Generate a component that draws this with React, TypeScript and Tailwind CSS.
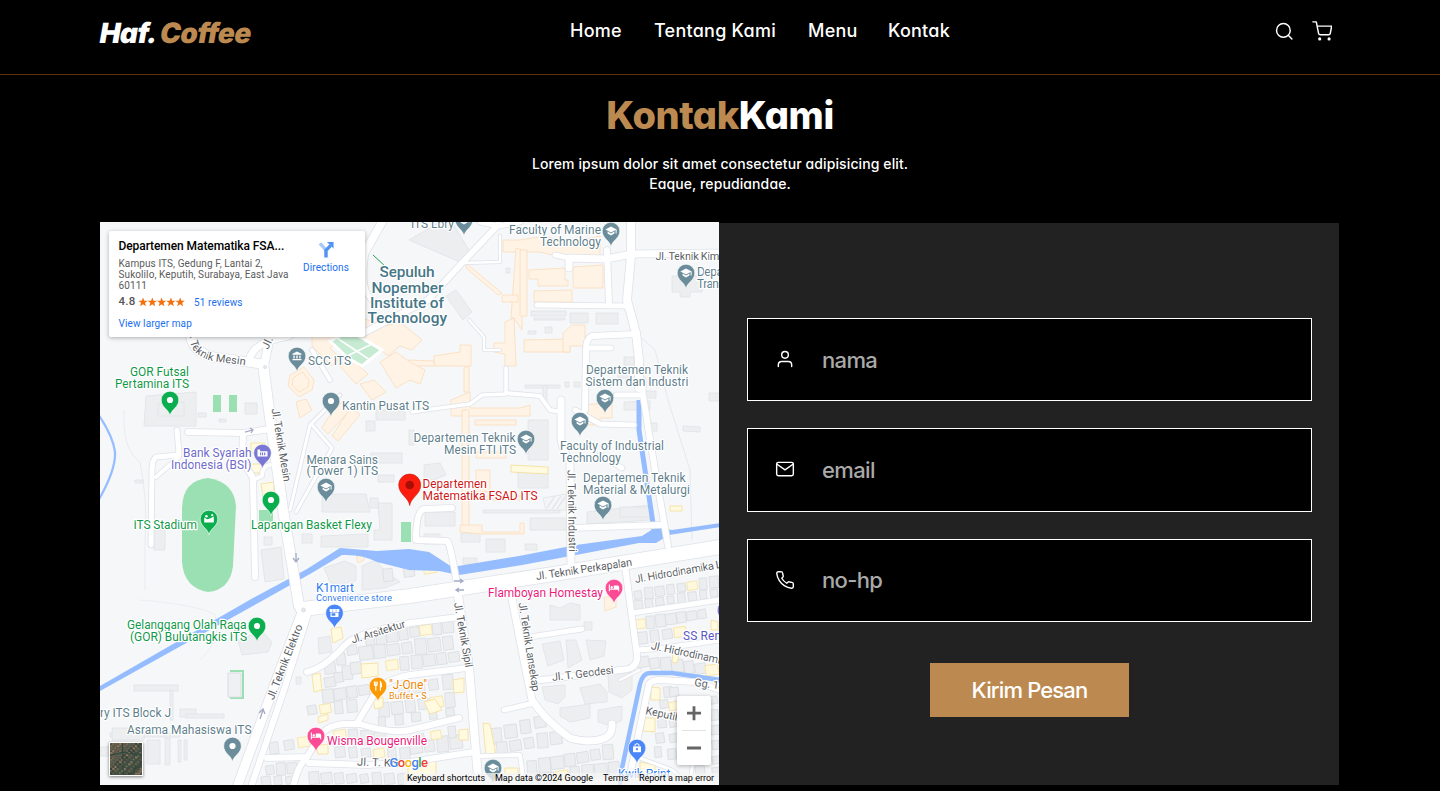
import { FiMail, FiPhone, FiSearch, FiShoppingCart, FiUser } from "react-icons/fi";

const GREY = "#6b8d9b";
const GREEN = "#0aae4f";
const PURPLE = "#7a76d3";
const PINK = "#fb4b94";
const BLUE = "#4a86f7";
const ORANGE = "#fb9a05";

type Glyph = "dot" | "cap" | "bank" | "shop" | "bed" | "fork" | "bag" | "field" | "card";

function PinGlyph({ kind }: { kind: Glyph }) {
  switch (kind) {
    case "dot":
      return <circle r="3.1" fill="#fff" />;
    case "cap":
      return (
        <g fill="#fff">
          <path d="M-5.6 -1.6 L0 -4.6 L5.6 -1.6 L0 1.4 Z" />
          <path d="M-3.4 .6 L0 2.4 L3.4 .6 V2.6 L0 4.4 L-3.4 2.6 Z" />
          <path d="M4.6 -1.6h1v4h-1z" />
        </g>
      );
    case "bank":
      return (
        <path
          fill="#fff"
          d="M-4.5 -2.2 L0 -4.6 L4.5 -2.2 V-1.2 H-4.5Z M-3.6 -.6h1.3v3.2h-1.3z M-.7 -.6h1.4v3.2h-1.4z M2.3 -.6h1.3v3.2h-1.3z M-4.5 3.1h9v1.2h-9z"
        />
      );
    case "shop":
      return (
        <g>
          <path d="M-4.8 -4H4.8V-1H-4.8Z M-4 -.5H4V4H-4Z" fill="#fff" />
          <path d="M-2.6 .6H.6V2.6H-2.6Z M-1.8 -4V-1 M1.6 -4V-1" fill={BLUE} stroke={BLUE} strokeWidth=".5" />
        </g>
      );
    case "bed":
      return <path d="M-5.2 -3.4h1.1V.7H-.3V-2.4H3.6Q5.2 -2.2 5.2 -.8V3.3H4.1V1.8H-4.1V3.3H-5.2Z M-2.3 -1.9a1.2 1.2 0 1 0 .01 0" fill="#fff" />;
    case "fork":
      return (
        <path
          d="M-3.6 -4.6V-1.6Q-3.4 0 -2.2 0V4.8 M-.8 -4.6V-1.6Q-1 0 -2.2 0 M-2.2 -4.6V0 M2.4 4.8V-4.4Q4 -3 3.6 .6H2.4"
          stroke="#fff"
          strokeWidth="1.1"
          fill="none"
        />
      );
    case "bag":
      return (
        <g>
          <path d="M-4 -1.6H4V4.2H-4Z" fill="#fff" />
          <path d="M-2 -1.6V-3.4Q0 -5.4 2 -3.4V-1.6" fill="none" stroke="#fff" strokeWidth="1" />
          <circle cy="1.2" r="1.1" fill={BLUE} />
        </g>
      );
    case "field":
      return (
        <g fill="#fff">
          <path d="M-4.8 -1.4L-2 .2L1 -.6L4.8 -2.4V3.4H-4.8Z" />
          <circle cx="-2.6" cy="-2.8" r="1.3" />
          <circle cx="3.2" cy="-3.8" r="1.1" />
        </g>
      );
    case "card":
      return (
        <g>
          <path d="M-5 -3.4H-2.4V-1.8H5V3.6H-5Z" fill="#fff" />
          <path d="M-2.4 -.4h1v2.6h-1z M-.6 -.4h1.2v2.6h-1.2z M1.6 -.4h1.2v2.6h-1.2z" fill={PURPLE} />
        </g>
      );
  }
}

const pins: [number, number, string, Glyph][] = [
  [297, 356, GREY, "bank"],
  [170, 400, GREEN, "dot"],
  [331, 401, GREY, "dot"],
  [464, 220, GREY, "cap"],
  [611, 231, GREY, "cap"],
  [686, 273, GREY, "cap"],
  [605, 398, GREY, "cap"],
  [262.5, 453, PURPLE, "card"],
  [209, 519, GREEN, "field"],
  [271, 500, GREEN, "dot"],
  [326, 487, GREY, "cap"],
  [526, 439, GREY, "cap"],
  [580, 421, GREY, "cap"],
  [603, 505, GREY, "cap"],
  [614, 588, PINK, "bed"],
  [726, 610, PURPLE, "dot"],
  [334.5, 613, BLUE, "shop"],
  [257, 626, GREEN, "dot"],
  [378, 686, ORANGE, "fork"],
  [316, 736, PINK, "bed"],
  [232.5, 746, GREY, "dot"],
  [637, 748, BLUE, "bag"],
  [493, 768, GREY, "cap"],
];

// text, x, baseline, width, fill, font size, rotation
type Label = [string, number, number, number, string, number?, number?];
const T = "#5f7f8d";
const G = "#11994a";
const R = "#5c6166";
const labels: Label[] = [
  ["ITS Lbry", 411, 227.5, 43, T],
  ["Faculty of Marine", 509, 233.5, 92, T],
  ["Technology", 540, 245.5, 61, T],
  ["Depa", 697, 276, 26, T],
  ["Tran", 697, 288, 22, T],
  ["SCC ITS", 308, 364.5, 43, T],
  ["GOR Futsal", 130, 375.5, 59, G],
  ["Pertamina ITS", 115, 387.5, 74, G],
  ["Kantin Pusat ITS", 342, 409.5, 87, T],
  ["Departemen Teknik", 586, 374, 102, T],
  ["Sistem dan Industri", 585.5, 386, 103, T],
  ["Departemen Teknik", 413.5, 442, 102, T],
  ["Mesin FTI ITS", 444, 454, 72, T],
  ["Faculty of Industrial", 560, 449.5, 104, T],
  ["Technology", 560, 461.5, 61, T],
  ["Departemen Teknik", 583, 482, 102.5, T],
  ["Material & Metalurgi", 583, 493.5, 107, T],
  ["Menara Sains", 306.5, 463.5, 71.5, T],
  ["(Tower 1) ITS", 306.5, 475, 71.5, T],
  ["Bank Syariah", 183, 456.5, 68.5, "#6f6acb"],
  ["Indonesia (BSI)", 171, 468.5, 80.5, "#6f6acb"],
  ["ITS Stadium", 133.5, 528.5, 63.5, G],
  ["Lapangan Basket Flexy", 251, 529, 121, G],
  ["Departemen", 422.5, 487.5, 64.5, "#cf1717"],
  ["Matematika FSAD ITS", 422.5, 499.5, 115, "#cf1717"],
  ["K1mart", 316, 592, 38, "#2f7af0"],
  ["Convenience store", 316, 601, 76, "#2f7af0", 9.5],
  ["Flamboyan Homestay", 488, 597, 115, "#ee1a7c"],
  ["Gelanggang Olah Raga", 127, 628.5, 119.5, G],
  ["(GOR) Bulutangkis ITS", 130, 640.5, 117, G],
  ["SS Rem", 683, 640, 42, "#5a56c4"],
  ["\"J-One\"", 389, 689, 38, "#ee8400"],
  ["Buffet • S", 389, 698.5, 37.5, "#ee8400", 9],
  ["Wisma Bougenville", 327, 744.5, 100, "#ee1a7c"],
  ["ry ITS Block J", 100, 717, 71, T],
  ["Asrama Mahasiswa ITS", 127, 734, 124.5, T],
  ["Kwik Print", 618, 777.5, 52.5, "#2f7af0"],
  ["Jl. Teknik Kim", 655.5, 259.5, 64, R, 11],
  ["Jl. T", 268, 350, 22, R, 11, -64],
  ["Jl. Teknik Mesin", 271.5, 409, 74, R, 11, 80.5],
  ["Jl. Teknik Industri", 567.5, 470, 82, R, 11, 89],
  ["Jl. Teknik Perkapalan", 536.5, 580, 97, R, 11, -8.5],
  ["Jl. Hidrodinamika L", 635.5, 583, 88, R, 11, -10],
  ["Jl. Teknik Sipil", 454, 603, 66, R, 11, 80],
  ["Jl. Teknik Lansekap", 518.5, 603, 90, R, 11, 81],
  ["Jl. Teknik Elektro", 273.5, 700.5, 80, R, 11, -68.5],
  ["Jl. Arsitektur", 352.5, 643.5, 56, R, 11, -17],
  ["Jl. T. Geodesi", 552.5, 681, 62, R, 11, -7],
  ["Jl. Hidrodinamika", 650.5, 649, 82, R, 11, 12],
  ["Gg. 1(", 694, 686, 28, R, 11, 7],
  ["Keputih", 645, 714, 36, R, 11, 12],
  ["Jl. T. Ko", 357, 765.5, 40, R, 11, 2],
];

// [path, road width]
const roads: [string, number][] = [
  ["M190 330 Q190 352 214 357 L262 364", 9],
  ["M250 358 Q254 342 288 336 L330 310", 7],
  ["M264 366 L270 336 L286 300", 8],
  ["M365 252 L382 222", 8],
  ["M366 252 Q360 290 372 300", 5],
  ["M499 224 L462 263 L428 300 L340 345", 6],
  ["M480 222 L499 226 L520 222", 5],
  ["M462 263 L500 262 V236", 2.5],
  ["M330 380 L312 350", 4],
  ["M569 268 V258 L606 259 L632 254 L720 253", 7],
  ["M555 255 L569 258", 5],
  ["M631 222 V256 L627 300 L636 333 L639 360 V388", 8],
  ["M607 250 L609 305", 6],
  ["M537 305 L629 306", 5],
  ["M636 334 L592 336 Q586 338 586 350 L585 410", 6],
  ["M588 348 L611 348", 5],
  ["M616 395 L643 395 V380", 5],
  ["M412 412 L440 408 L470 404 L482 395 L506 394 V368", 3.5],
  ["M469 320 L484 337 V350 H500", 2.5],
  ["M506 393 L540 396 L550 410 L561 412", 4],
  ["M561 400 V440 Q564 452 570 462 L571 566", 7],
  ["M575 410 L600 424 L634 425", 5],
  ["M600 455 L622 468", 5],
  ["M570 528 L660 525", 6],
  ["M643 395 L650 440 L668 546", 6],
  ["M188 432 L243 433 L270 429", 6],
  ["M177 430 L179 455 L156 457 Q152 460 152 470 L151 545", 5],
  ["M179 457 L156 477", 4],
  ["M243 433 L242 460 L253 478 L255 577", 6],
  ["M270 465 Q262 466 262 476 L253 480", 4],
  ["M340 395 L310 425 L290 510", 3],
  ["M312 425 L332 448 L296 512", 3],
  ["M303 609 L410 596 L560 573 L720 547", 14],
  ["M452 508 L424 509 Q416 511 416 540 L447 541 Q450 541 458 590", 6],
  ["M458 595 L469 667 L479 790", 8],
  ["M509 583 L520 640 L532 700 Q545 720 570 738 Q590 744 605 738 Q613 734 612 724", 7],
  ["M534 681 L628 669 Q638 666 637 655 L625 566", 6],
  ["M530 637 L582 629", 5],
  ["M504 710 L534 703", 5],
  ["M632 613 L720 600", 5],
  ["M637 650 L665 648 L720 640", 5],
  ["M628 785 L649 684 Q652 680 660 680 L696 682 L720 690", 6],
  ["M640 758 L672 770 L690 785", 3],
  ["M700 700 L690 785", 3],
  ["M307 672 Q325 668 345 645 Q358 632 410 623 L459 617", 6],
  ["M267 758 L307 757 L316 742 Q324 725 345 724 L360 724 Q390 734 410 730 L459 718", 6],
  ["M307 757 Q296 768 293 790", 6],
  ["M309 763 L367 765 L410 762 L474 752", 6],
  ["M357 723 L377 690 Q390 678 410 675 L466 668", 6],
  ["M480 756 L520 755 L524 785", 4],
  ["M263 364 L269 410 L283 510 L299 606", 10],
  ["M303 610 L280 670 L236 790", 9],
  ["M308 614 L284 690 L250 790", 6],
  ["M620 680 L640 670", 2],
];

const grey: string[] = [
  "M409 240 L440 222 H452 L470 252 L460 262 Z",
  "M446 296 L456 290 L472 312 L463 320 Z",
  "M146 396 L196 392 V426 H144 Z",
  "M158 404 L184 402 V416 H158 Z", "M198 413 H206 V417 H198 Z", "M219 419 H226 V422 H219 Z", "M245 403 H257 V414 H245 Z",
  "M531 311 H566 V316 H531 Z", "M534 318 H565 V320 H534 Z", "M570 313 H588 V323 H570 Z", "M596 313 H618 V324 H596 Z",
  "M545 327 H552 V333 H545 Z", "M528 331 H536 V334 H528 Z", "M506 268 H510 V273 H506 Z",
  "M672 276 H702 V292 H690 V297 H680 V292 H672 Z",
  "M624 357 H634 V365 H624 Z", "M525 385 H560 V388 H525 Z", "M543 386 H547 V404 H543 Z", "M644 391 H656 V398 H644 Z", "M709 393 H720 V401 H709 Z",
  "M565 382 H569 V387 H565 Z", "M574 382 H580 V387 H574 Z", "M618 368 H630 V378 H618 Z",
  "M624 402 L650 401 V410 H624 Z",
  "M683 426 L700 427 V432 L683 431 Z", "M650 423 H657 V431 H650 Z",
  "M528 420 H548 V460 H528 Z", "M518 472 H548 V488 H518 Z",
  "M409 430 H414 V445 H409 Z", "M424 465 L440 463 L446 475 L434 480 H424 Z",
  "M322 494 L366 494 L370 512 L322 512 Z", "M378 503 H392 V540 H374 V530 H380 Z", "M321 536 L368 534 V547 H321 Z",
  "M371 453 H402 V463 H371 Z", "M378 475 H394 V482 H378 Z", "M370 498 H378 V508 H370 Z", "M366 421 H375 V431 H366 Z", "M376 410 H405 V420 H376 Z",
  "M425 512 H455 V526 H425 Z", "M424 534 H440 V544 H424 Z", "M461 533 H480 V542 H461 Z", "M486 539 H505 V552 H486 Z",
  "M530 518 H566 V530 H530 Z", "M483 510 H560 V513 H483 Z", "M525 544 H537 V550 H525 Z", "M463 558 H477 V564 H463 Z",
  "M587 512 L650 505 V520 L587 524 Z", "M620 507 H650 V517 H620 Z",
  "M261 550 L281 547 L284 579 L265 582 Z", "M302 534 H312 V543 H302 Z", "M264 537 H272 V545 H264 Z",
  "M154 530 H165 V550 H154 Z", "M135 480 H143 V483 H135 Z",
  "M324 568 L345 561 L356 566 V580 L345 590 L330 582 Z", "M362 566 L376 560 L386 572 L400 582 L385 588 L362 590 Z",
  "M238 640 L262 631 L272 642 L268 652 L242 655 Z",
  "M134 685 H178 V691 H134 Z", "M170 690 H173 V720 H170 Z", "M180 709 H196 V717 H180 Z", "M186 714 H224 V718 H186 Z",
  "M110 733 H180 V737 H110 Z", "M178 740 H181 V762 H178 Z", "M184 740 H187 V760 H184 Z", "M147 740 H160 V764 H147 Z", "M165 738 H170 V765 H165 Z",
  "M318 638 L330 636 L332 652 L319 654 Z", "M296 677 H301 V684 H296 Z",
  "M542 687 L565 685 V697 L558 704 L545 700 Z", "M580 688 L600 684 L607 692 V702 L585 704 Z",
  "M608 675 L632 672 V690 L622 698 L609 692 Z", "M560 708 L590 704 V718 L570 722 L560 716 Z",
  "M598 710 L622 706 V720 L612 726 L598 722 Z",
  "M542 644 L560 641 L564 660 L548 666 Z", "M566 640 L576 640 L582 660 L568 668 Z", "M586 640 L606 641 L604 656 L590 660 Z",
  "M550 605 L560 608 L570 603 L580 605 V620 L550 620 Z", "M584 622 H592 V630 H584 Z",
  "M100 747 H142 V756 H100 Z", "M112 728 H144 V740 H112 Z",
];

const peach: string[] = [
  "M503 240 H520 L546 236 L566 244 L600 236 V261 L580 262 L540 252 H503 Z",
  "M516 248 L522 250 V330 L514 318 H511 Z",
  "M520 250 H527 V316 H520 Z",
  "M529 270 L565 268 V280 H568 V286 H538 V279 H529 Z",
  "M573 267 L603 265 V288 H573 Z", "M534 291 L572 290 V302 H534 Z", "M502 295 H518 V302 H502 Z",
  "M467 264 L502 293 L498 295 L466 268 Z",
  "M505 322 L514 318 L516 366 H505 V354 L494 352 V343 H505 Z",
  "M524 340 L570 339 V352 H524 Z", "M563 333 L572 325 H585 V346 H570 V352 H563 Z",
  "M434 356 L460 352 V345 H471 V366 H434 Z", "M409 360 L434 361 V366 H409 Z", "M464 367 H469 V392 H464 Z",
  "M451 400 L470 392 V408 H520 L530 405 V416 H451 Z",
  "M312 330 L326 325 L344 338 L330 348 L340 358 L332 366 L312 346 Z",
  "M362 318 L385 326 L400 322 L422 340 L412 350 L400 346 L388 356 L374 344 L366 348 Z",
  "M380 362 L396 352 L410 362 L425 370 L420 384 L410 380 L396 388 Z",
  "M338 364 L352 360 L368 374 L356 384 Z", "M360 384 L374 380 L386 392 L372 400 Z",
  "M290 375 L304 367 L314 380 L312 390 L299 397 L288 386 Z", "M293 378 L303 372 L309 381 L308 387 L299 392 L292 385 Z", "M296 402 L306 399 L312 410 L300 418 Z",
  "M334 408 L342 402 L350 410 L328 434 L322 428 Z", "M348 412 L354 408 L360 415 L338 441 L332 436 Z",
  "M462 410 H469 V530 H462 Z", "M460 525 H482 V532 H520 V523 H524 V534 H482 L460 532 Z",
  "M475 420 H516 V425 H475 Z", "M476 452 H506 V458 H476 Z", "M476 470 L490 470 V492 H476 Z", "M484 496 H521 V500 H484 Z",
  "M585 405 L612 402 V418 H600 V425 H588 Z",
  "M356 553 L364 553 V560 L358 563 Z", "M604 597 L616 597 V607 L605 611 Z",
];

const yellow: string[] = [
  "M511 465 L548 467 V474 L511 472 Z", "M251 443 H265 V452 H251 Z", "M251 464 H262 V473 H251 Z", "M261 484 L274 482 V496 H263 Z",
  "M670 506 H682 V511 H670 Z", "M331 629 L341 627 L343 638 L333 643 Z", "M361 664 L378 663 V676 L362 678 Z",
  "M373 700 L383 697 V707 L375 709 Z", "M312 675 L320 673 L322 690 L314 692 Z", "M318 717 L328 714 V720 L319 723 Z",
  "M453 680 L464 678 V692 L454 693 Z", "M424 702 L435 699 L442 710 L430 714 Z", "M483 723 L490 724 L496 755 L486 757 Z",
  "M316 746 L328 744 V754 H318 Z", "M651 687 L660 688 V700 L651 700 Z", "M645 718 L655 718 V732 L643 731 Z",
  "M459 730 L468 729 V740 H459 Z", "M408 765 L436 760 V775 L408 778 Z", "M505 768 H518 V774 H505 Z", "M640 762 L655 765 V774 H640 Z",
  "M673 653 L679 655 L677 663 L672 662 Z", "M711 620 L718 622 V630 L711 630 Z",
];

// rows of houses: start x, start y, end x, end y, count, size
const houseRows: number[][] = [
  [370, 640, 448, 626, 8, 13], [366, 653, 448, 643, 7, 15], [392, 665, 454, 657, 6, 13],
  [330, 668, 352, 650, 3, 13], [330, 682, 356, 668, 4, 13], [328, 696, 364, 690, 4, 13], [312, 710, 352, 706, 4, 12],
  [384, 710, 450, 700, 6, 14], [404, 690, 448, 682, 4, 14], [382, 722, 450, 712, 5, 10],
  [274, 748, 304, 742, 3, 13], [270, 770, 292, 768, 3, 12], [266, 781, 290, 780, 3, 10],
  [340, 735, 380, 738, 4, 13], [340, 752, 405, 754, 6, 12], [416, 748, 456, 742, 4, 15],
  [314, 778, 402, 779, 8, 12], [420, 738, 452, 732, 3, 11],
  [496, 736, 540, 722, 4, 15], [502, 748, 556, 738, 5, 14], [532, 768, 608, 752, 7, 14], [536, 780, 614, 768, 7, 14],
  [638, 595, 714, 582, 8, 11], [638, 605, 714, 593, 8, 10], [640, 624, 702, 614, 7, 12], [642, 638, 680, 632, 4, 13],
  [643, 662, 712, 670, 7, 14], [668, 692, 674, 692, 2, 10], [664, 704, 674, 706, 2, 11], [662, 722, 674, 722, 2, 11],
  [660, 738, 674, 738, 2, 11], [658, 752, 672, 754, 2, 10], [388, 575, 430, 568, 3, 14], [714, 700, 716, 760, 5, 10],
  [700, 770, 716, 772, 2, 10],
];

function Houses() {
  return (
    <>
      {houseRows.flatMap(([x1, y1, x2, y2, n, s], r) =>
        Array.from({ length: n }, (_, i) => {
          const t = n > 1 ? i / (n - 1) : 0;
          const k = (r * 7 + i * 5) % 11;
          const w = s * (0.68 + (k % 4) * 0.08);
          const h = s * (0.75 + (k % 3) * 0.15);
          const warm = k === 3;
          return (
            <rect
              key={`${r}-${i}`}
              x={x1 + (x2 - x1) * t - w / 2}
              y={y1 + (y2 - y1) * t - h / 2}
              width={w}
              height={h}
              fill={warm ? "#fff8dc" : "#ebedef"}
              stroke={warm ? "#f6e3a4" : "#dadde2"}
              strokeWidth=".8"
              transform={`rotate(${-9 + (k % 3) * 2} ${x1 + (x2 - x1) * t} ${y1 + (y2 - y1) * t})`}
            />
          );
        }),
      )}
    </>
  );
}

function MapCanvas() {
  return (
    <svg viewBox="100 222 619 563" className="block h-full w-full font-['Roboto',sans-serif]">
      <rect x="100" y="222" width="619" height="563" fill="#f5f7f9" />
      <path d="M124 410 Q122 450 140 462 Q148 500 145 545 V590" fill="none" stroke="#e9ebef" />
      <path d="M636 333 L655 350 L668 400 L690 470 L692 540" fill="none" stroke="#e6e8ec" />
      <path d="M140 600 Q200 605 215 615 Q222 640 200 660" fill="none" stroke="#eceef1" />
      <g fill="#9be0b3">
        <path d="M182 508 Q183 480 208 478 Q234 482 236 506 L233 566 Q230 590 208 592 Q184 588 182 562 Z" />
        <path d="M213 395h8v17h-8z M229 395h8v17h-8z M401 522h10v20h-10z M259 510h14v12h-14z" />
      </g>
      <path d="M373 255 L385 266" stroke="#2aa354" strokeWidth="1" />
      <path d="M230 671 H243 V698 H230" fill="none" stroke="#9be0b3" strokeWidth="2" />
      <path d="M228 673 H241 V697 H228 Z" fill="#eef0f1" stroke="#dadde2" />
      <g fill="#edeef0" stroke="#e0e2e6" strokeWidth=".8">
        {grey.map((d) => (
          <path key={d} d={d} />
        ))}
      </g>
      <g fill="#fff3e5" stroke="#fbdfc0" strokeWidth=".9">
        {peach.map((d) => (
          <path key={d} d={d} />
        ))}
      </g>
      <Houses />
      <g fill="#fffae0" stroke="#f5e0a0" strokeWidth=".9">
        {yellow.map((d) => (
          <path key={d} d={d} />
        ))}
      </g>
      <g fill="#94bcff">
        <path d="M100 686 L253 598 L307 569 L340 548 L377 551 L409 549 L429 552 L452 567 L519 556 L576 545 L642 536 L656 527 L672 530 L720 523 V527 L669 535 L656 543 L639 543 L576 555 L522 565 L459 575 L439 571 L409 570 L377 562 Q362 554 342 555 L310 574 L260 602 L100 691 Z" />
      </g>
      <g fill="none" stroke="#94bcff">
        <path d="M98 414 Q113 436 115 452 Q116 470 98 501" strokeWidth="2.2" />
        <path d="M639 400 V430 L654 530" strokeWidth="5" />
        <path d="M620 785 L622 768 L640 684 Q643 673 650 673 L672 673 L720 680" strokeWidth="4.5" />
      </g>
      <g fill="none" stroke="#dfe2e9" strokeLinecap="round" strokeLinejoin="round">
        {roads.map(([d, w]) => (
          <path key={d} d={d} strokeWidth={w + 1.6} />
        ))}
      </g>
      <g fill="none" stroke="#fff" strokeLinecap="round" strokeLinejoin="round">
        {roads.map(([d, w]) => (
          <path key={d} d={d} strokeWidth={w} />
        ))}
      </g>
      <path d="M330 341 L350 331 L382 350 L362 366 L348 358 Z" fill="#c6ebd2" stroke="#fff" strokeWidth="3" />
      <path d="M337 338 L370 360 M372 344 L345 357" stroke="#fff" strokeWidth="1.6" />
      <circle cx="303.5" cy="610" r="7" fill="#fff" />
      <circle cx="303.5" cy="610" r="2" fill="#e7eaef" stroke="#cdd1da" strokeWidth=".6" />
      <circle cx="265" cy="367" r="1.5" fill="#e7eaef" stroke="#cdd1da" strokeWidth=".6" />
      <path d="M543 498 L566 494 V510 H546 Z" fill="#f4f5f7" stroke="#dfe2e9" strokeWidth=".8" />
      <path d="M547 508l8-12 M552 509l9-13 M557 509l8-12" stroke="#dfe2e9" strokeWidth="1.2" />
      <g fill="none" stroke="#a5abc4" strokeWidth="1.3">
        <path d="M245 432 L252 430 M250 428 L253 430 L251 433" />
        <path d="M296 553 V561 M293 558 L296 562 L299 558" />
        <path d="M260 719 L263 710 M259 713 L263 709 L265 714" />
        <path d="M454 581 L462 581 M460 579 L463 581 L460 583 M464 590 L456 590 M459 588 L456 590 L459 592" />
      </g>

      <g stroke="#fff" strokeWidth="2.4" strokeLinejoin="round" style={{ paintOrder: "stroke" }}>
        {labels.map(([text, x, y, w, fill, size = 12, rot = 0], i) => (
          <text
            key={i}
            x={x}
            y={y}
            textLength={w}
            fontSize={size}
            fill={fill}
            transform={rot ? `rotate(${rot} ${x} ${y})` : undefined}
          >
            {text}
          </text>
        ))}
        <path id="mesin" d="M190 336 Q189 355 212 361 L275 369" fill="none" stroke="none" />
        <text fontSize="11" fill={R}>
          <textPath href="#mesin">. Teknik Mesin</textPath>
        </text>
        <g fontSize="15.5" fontWeight="500" fill="#467686">
          <text x="379.5" y="277" textLength="55">Sepuluh</text>
          <text x="371.5" y="292.5" textLength="72">Nopember</text>
          <text x="370" y="308" textLength="74">Institute of</text>
          <text x="367.5" y="323" textLength="79.5">Technology</text>
        </g>
        <text x="389.5" y="766.5" fontSize="13" fontWeight="500" textLength="38.5" strokeWidth="1">
          <tspan fill="#4285f4">G</tspan>
          <tspan fill="#ea4335">o</tspan>
          <tspan fill="#fbbc05">o</tspan>
          <tspan fill="#4285f4">g</tspan>
          <tspan fill="#34a853">l</tspan>
          <tspan fill="#ea4335">e</tspan>
        </text>
      </g>

      {pins.map(([x, y, color, kind], i) => (
        <g key={i} transform={`translate(${x} ${y})`}>
          <path
            d="M0 16 C-.8 9.5 -8.8 7.5 -8.8 0 A8.8 8.8 0 1 1 8.8 0 C8.8 7.5 .8 9.5 0 16Z"
            fill={color}
            stroke="#fff"
            strokeWidth=".6"
          />
          <PinGlyph kind={kind} />
        </g>
      ))}
      <g transform="translate(409.7 485.5)">
        <path
          d="M0 20 C-1 12 -11 9 -11 -.5 A11 11 0 0 1 11 -.5 C11 9 1 12 0 20Z"
          fill="#fb1e0e"
          stroke="#c9160a"
          strokeWidth=".6"
        />
        <circle cy="-.5" r="4.3" fill="#a80e05" />
      </g>
    </svg>
  );
}

function SatelliteThumb() {
  const tones = ["#5a6152", "#7b6553", "#3d4f42", "#8a7562", "#34463c", "#66604f", "#93745f"];
  return (
    <svg viewBox="0 0 31 31" className="h-full w-full">
      <rect width="31" height="31" fill="#4c5143" />
      {Array.from({ length: 196 }, (_, i) => (
        <rect
          key={i}
          x={(i % 14) * 2.2}
          y={Math.floor(i / 14) * 2.2}
          width={1.4 + ((i * 7) % 3) * 0.6}
          height={1.2 + ((i * 5) % 3) * 0.6}
          fill={tones[(i * 31 + ((i * i) % 13) * 5 + Math.floor(i / 14) * 3) % 7]}
        />
      ))}
      <path d="M0 12 L12 9 L31 12 M12 0 L13 31" stroke="#2e4640" strokeWidth="1" fill="none" />
    </svg>
  );
}

function MapCard() {
  return (
    <div className="absolute top-[9px] left-[9px] flex h-[106px] w-[256px] justify-between rounded-xs bg-white pt-2 pr-4 pl-[9.5px] shadow-[0_1px_4px_rgba(0,0,0,0.3)]">
      <div className="whitespace-nowrap">
        <div className="text-[12px] leading-[14px] font-medium tracking-[-0.08px] text-black">Departemen Matematika FSA...</div>
        <div className="mt-[4.5px] text-[10px] leading-[11px] tracking-[0.09px] text-[#5b5b5b]">
          Kampus ITS, Gedung F, Lantai 2,
          <br />
          Sukolilo, Keputih, Surabaya, East Java
          <br />
          60111
        </div>
        <div className="mt-[4.5px] flex h-3.5 items-center">
          <span className="w-[19px] text-[11.5px] font-medium tracking-[0.2px] text-[#555]">4.8</span>
          <svg viewBox="0 0 47 10" className="h-[10px] w-[47px]" fill="#f4700e">
            {[0, 1, 2, 3, 4].map((i) => (
              <path
                key={i}
                transform={`translate(${i * 9.3 + 5} 5.2)`}
                d="M0 -4.8 L1.25 -1.55 L4.7 -1.45 L2 .65 L2.9 4 L0 2.1 L-2.9 4 L-2 .65 L-4.7 -1.45 L-1.25 -1.55Z"
              />
            ))}
          </svg>
          <span className="ml-[9.5px] text-[10px] tracking-[0.1px] text-[#1a6ff0]">51 reviews</span>
        </div>
        <div className="mt-[7.5px] text-[10px] leading-[13px] tracking-[0.1px] text-[#1a6ff0]">View larger map</div>
      </div>
      <div className="flex flex-col items-center">
        <svg viewBox="0 0 16 18" className="mt-[2px] h-[17px] w-4">
          <path d="M1.5 2.5 L8 9.5" stroke="#a9c9fb" strokeWidth="3.6" fill="none" />
          <path d="M8 17.5 V10 L13 4.6" stroke="#4f94f4" strokeWidth="3.6" fill="none" />
          <path d="M9 1 H16 V8 Z" fill="#4f94f4" />
        </svg>
        <span className="mt-[4px] text-[10px] leading-3 tracking-[0.1px] text-[#1a6ff0]">Directions</span>
      </div>
    </div>
  );
}

function MapPanel() {
  return (
    <div className="relative -mt-px h-[563px] w-[619px] shrink-0 overflow-hidden font-['Roboto',sans-serif]">
      <MapCanvas />
      <MapCard />
      <div className="absolute bottom-[9px] left-[9px] h-[34px] w-[34px] border border-white shadow-[0_1px_3px_rgba(0,0,0,0.5)]">
        <SatelliteThumb />
      </div>
      <div className="absolute right-2 bottom-5 flex h-[69px] w-[34px] flex-col items-center rounded-xs bg-white shadow-[0_1px_4px_rgba(0,0,0,0.3)]">
        <svg viewBox="0 0 34 69" className="h-full w-full" stroke="#666" strokeWidth="2.8">
          <path d="M10 17.2 H24 M17 10.2 V24.2 M10 52 H24" />
          <path d="M5 34.5 H29" stroke="#e2e2e2" strokeWidth="1" />
        </svg>
      </div>
      <div className="absolute right-0 bottom-0 flex h-3 items-center gap-2.5 bg-[#f5f5f5]/75 pr-[5px] pl-[3px] text-[9px] whitespace-nowrap text-black">
        <span className="w-[78px]">Keyboard shortcuts</span>
        <span className="w-[98px]">Map data ©2024 Google</span>
        <span className="w-[26px]">Terms</span>
        <span className="w-[75px]">Report a map error</span>
      </div>
    </div>
  );
}

const fields = [
  { name: "nama", Icon: FiUser, type: "text" },
  { name: "email", Icon: FiMail, type: "email" },
  { name: "no-hp", Icon: FiPhone, type: "tel" },
];

export default function App() {
  return (
    <div className="h-[791px] overflow-hidden bg-black font-['Inter',sans-serif] text-white">
      <header className="flex h-[75px] justify-between border-b border-[#5b300b] pr-[108px] pl-[98px] [font-feature-settings:'cv11']">
        <div className="mt-[15px] w-[156px] -skew-x-10 text-[28px] leading-9 font-black tracking-[-0.65px] whitespace-nowrap">
          Haf. <span className="text-[#bc8a50]">Coffee</span>
        </div>
        <nav className="mt-[17px] mr-[9px] flex gap-[31px] text-[18px] leading-7 font-medium tracking-[0.25px] whitespace-nowrap">
          <a className="w-[53px]">Home</a>
          <a className="w-[123px]">Tentang Kami</a>
          <a className="w-[49px]">Menu</a>
          <a className="w-[61px]">Kontak</a>
        </nav>
        <div className="mt-[21px] flex gap-[17px]">
          <FiSearch size={20.5} strokeWidth={1.7} />
          <FiShoppingCart size={20.5} strokeWidth={1.7} />
        </div>
      </header>

      <main className="px-[100px] text-center">
        <div className="[font-feature-settings:'cv11']">
          <h2 className="pt-[17px] text-[38px] leading-[46px] font-extrabold tracking-[-0.45px]">
            <span className="text-[#bc8a50]">Kontak</span>Kami
          </h2>
          <p className="mt-[16px] text-[14px] leading-5 font-medium tracking-[0.1px]">
            Lorem ipsum dolor sit amet consectetur adipisicing elit.
            <br />
            Eaque, repudiandae.
          </p>
        </div>
        <div className="mt-[29px] flex h-[562px] w-[1239px] bg-[#222] text-left">
          <MapPanel />
          <form className="flex w-[620px] flex-col items-center pt-[95px] pr-[27px] pl-7">
            <div className="flex w-full flex-col gap-[27.35px]">
              {fields.map(({ name, Icon, type }) => (
                <label key={name} className="flex h-[83.1px] items-center border border-white bg-black pl-[27px]">
                  <Icon size={20} strokeWidth={1.7} className="mb-px shrink-0" />
                  <input
                    type={type}
                    placeholder={name}
                    className="mt-px ml-[27px] w-full bg-transparent text-[22px] font-[450] tracking-[-0.65px] outline-none placeholder:text-[#a9a9a9]"
                  />
                </label>
              ))}
            </div>
            <button type="button" className="mt-[41px] h-[54px] w-[199px] bg-[#bc8a50] pt-px text-[22px] font-[550] tracking-[-0.85px]">
              Kirim Pesan
            </button>
          </form>
        </div>
      </main>
    </div>
  );
}
